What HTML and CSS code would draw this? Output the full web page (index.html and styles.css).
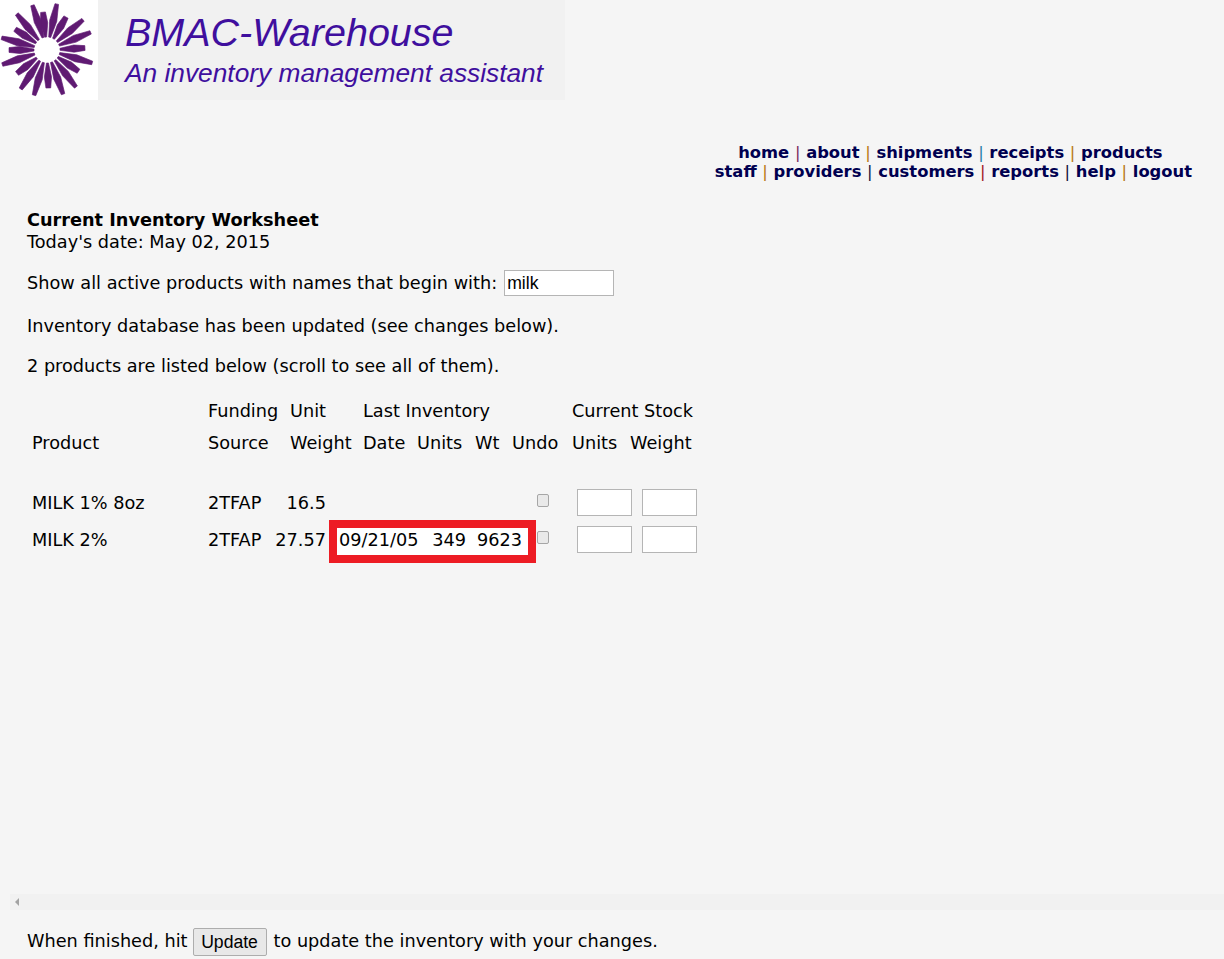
FILE: index.html
```html
<!DOCTYPE html>
<html lang="en">
<head>
    <meta charset="UTF-8">
    <meta name="viewport" content="width=device-width, initial-scale=1.0">
    <title>BMAC-Warehouse</title>
    <link rel="stylesheet" href="styles.css">
</head>
<body>
    <div class="page">
        <header class="banner">
            <svg class="logo" width="98" height="100" viewBox="0 0 98 100" aria-hidden="true">
                <defs>
                    <path id="ray-long" d="M-1 -13 L-3.6 -30 L-1.8 -47 L1.8 -47 L3.6 -30 L1 -13 Z"/>
                    <path id="ray-short" d="M-1 -13 L-3.6 -27 L-2.4 -38 L2.4 -38 L3.6 -27 L1 -13 Z"/>
                </defs>
                <rect width="98" height="100" fill="#fff"/>
                <g transform="translate(47 50)" fill="#5f1a72" stroke="#5f1a72" stroke-width="0.6" stroke-linejoin="round">
                    <use href="#ray-long" transform="rotate(12)"/>
                    <use href="#ray-short" transform="rotate(-6)"/>
                    <use href="#ray-short" transform="rotate(30)"/>
                    <use href="#ray-long" transform="rotate(50)"/>
                    <use href="#ray-long" transform="rotate(68)"/>
                    <use href="#ray-short" transform="rotate(87)"/>
                    <use href="#ray-long" transform="rotate(106)"/>
                    <use href="#ray-short" transform="rotate(124)"/>
                    <use href="#ray-long" transform="rotate(142)"/>
                    <use href="#ray-long" transform="rotate(160)"/>
                    <use href="#ray-short" transform="rotate(178)"/>
                    <use href="#ray-long" transform="rotate(196)"/>
                    <use href="#ray-long" transform="rotate(214)"/>
                    <use href="#ray-short" transform="rotate(232)"/>
                    <use href="#ray-long" transform="rotate(252)"/>
                    <use href="#ray-short" transform="rotate(270)"/>
                    <use href="#ray-long" transform="rotate(285)"/>
                    <use href="#ray-short" transform="rotate(303)"/>
                    <use href="#ray-long" transform="rotate(320)"/>
                    <use href="#ray-long" transform="rotate(342)"/>
                </g>
            </svg>
            <div class="banner-text">
                <div class="banner-title">BMAC-Warehouse</div>
                <div class="banner-sub">An inventory management assistant</div>
            </div>
        </header>

        <nav class="topnav">
            <div class="nav-first"><a href="#">home</a> <span class="sep plum">|</span> <a href="#">about</a> <span class="sep amber">|</span> <a href="#">shipments</a> <span class="sep teal">|</span> <a href="#">receipts</a> <span class="sep amber">|</span> <a href="#">products</a></div>
            <div><a href="#">staff</a> <span class="sep amber">|</span> <a href="#">providers</a> <span class="sep navy">|</span> <a href="#">customers</a> <span class="sep red">|</span> <a href="#">reports</a> <span class="sep navy">|</span> <a href="#">help</a> <span class="sep amber">|</span> <a href="#">logout</a></div>
        </nav>

        <main class="content">
            <h1>Current Inventory Worksheet</h1>
            <p class="today">Today's date: May 02, 2015</p>
            <form class="filter">
                <label for="prefix">Show all active products with names that begin with:</label>
                <input type="text" id="prefix" class="prefix" value="milk">
            </form>
            <p class="status">Inventory database has been updated (see changes below).</p>
            <p class="status second">2 products are listed below (scroll to see all of them).</p>

            <table class="heads">
                <colgroup>
                    <col class="h1"><col class="h2"><col class="h3"><col class="h4"><col class="h5"><col class="h6"><col class="h7"><col class="h8"><col class="h9">
                </colgroup>
                <tr>
                    <td></td>
                    <td>Funding</td>
                    <td>Unit</td>
                    <td colspan="3">Last Inventory</td>
                    <td></td>
                    <td colspan="2">Current Stock</td>
                </tr>
                <tr>
                    <td>Product</td>
                    <td>Source</td>
                    <td>Weight</td>
                    <td>Date</td>
                    <td>Units</td>
                    <td>Wt</td>
                    <td>Undo</td>
                    <td>Units</td>
                    <td>Weight</td>
                </tr>
            </table>
        </main>

        <div class="scroller">
            <div class="rows">
                <table class="items">
                    <colgroup>
                        <col class="d1"><col class="d2"><col class="d3"><col class="d4"><col class="d5"><col class="d6"><col class="d7"><col class="d8"><col class="d9">
                    </colgroup>
                    <tr>
                        <td class="name">MILK 1% 8oz</td>
                        <td class="name">2TFAP</td>
                        <td class="num">16.5</td>
                        <td class="date"></td>
                        <td class="num"></td>
                        <td class="num"></td>
                        <td class="mid"><input type="checkbox" class="undo"></td>
                        <td class="num"><input type="text" class="qty"></td>
                        <td class="num"><input type="text" class="qty"></td>
                    </tr>
                    <tr>
                        <td class="name">MILK 2%</td>
                        <td class="name">2TFAP</td>
                        <td class="num">27.57</td>
                        <td class="date">09/21/05</td>
                        <td class="num">349</td>
                        <td class="num">9623</td>
                        <td class="mid"><input type="checkbox" class="undo"></td>
                        <td class="num"><input type="text" class="qty"></td>
                        <td class="num"><input type="text" class="qty"></td>
                    </tr>
                </table>
                <div class="callout"></div>
            </div>
            <div class="hbar"><span class="hbar-arrow"></span></div>
        </div>

        <footer class="finish">
            When finished, hit <button type="button" class="update">Update</button> to update the inventory with your changes.
        </footer>
    </div>
</body>
</html>
```

FILE: styles.css
```css
html, body {
    margin: 0;
    height: 100%;
    overflow: hidden;
}

body {
    font-family: "DejaVu Sans", Verdana, sans-serif;
    font-size: 17.7px;
    background-color: #f5f5f5;
    color: #000;
}

.page {
    display: flex;
    flex-direction: column;
    height: 959px;
}

/* banner */
.banner {
    display: flex;
    width: 565px;
    height: 100px;
    background-color: #f1f1f1;
}

.logo {
    flex: none;
}

.banner-text {
    padding-left: 27px;
    font-family: "Liberation Sans", Arial, sans-serif;
    font-style: italic;
    color: #3f0f9e;
}

.banner-title {
    margin-top: 9px;
    font-size: 39.5px;
    line-height: 46px;
}

.banner-sub {
    margin-top: 3px;
    font-size: 26.3px;
    line-height: 30px;
}

/* nav */
.topnav {
    align-self: flex-end;
    margin: 43px 32px 0 0;
    text-align: center;
    font-weight: bold;
    font-size: 16.35px;
    line-height: 19px;
    color: #000050;
}

.topnav a {
    color: #000050;
    text-decoration: none;
}

.nav-first {
    padding-right: 6px;
}

.sep {
    font-weight: normal;
}

.plum { color: #7a1f5f; }
.amber { color: #b8770f; }
.teal { color: #1f7fa8; }
.navy { color: #10103a; }
.red { color: #a01020; }

/* worksheet top */
.content {
    padding: 28px 0 0 27px;
}

h1 {
    margin: 0;
    font-size: 17.7px;
    line-height: 22px;
    font-weight: bold;
}

.today {
    margin: 0;
    line-height: 22px;
}

.filter {
    display: flex;
    align-items: center;
    gap: 7px;
    margin-top: 17px;
    height: 26px;
}

.prefix {
    width: 110px;
    height: 26px;
    box-sizing: border-box;
    padding: 0 2px;
    border: 1px solid #b5b5b5;
    background-color: #fff;
    font-family: "Liberation Sans", Arial, sans-serif;
    font-size: 17.6px;
}

.status {
    margin: 19px 0 0;
    line-height: 22px;
}

.status.second {
    margin-top: 18px;
}

/* column heads */
table {
    border-collapse: collapse;
    table-layout: fixed;
}

td {
    box-sizing: border-box;
    padding: 0;
    white-space: nowrap;
}

.heads {
    margin-top: 18px;
    width: 668px;
}

.heads td {
    height: 32px;
    padding-left: 5px;
    line-height: 20px;
}

.h1 { width: 176px; }
.h2 { width: 82px; }
.h3 { width: 73px; }
.h4 { width: 54px; }
.h5 { width: 58px; }
.h6 { width: 37px; }
.h7 { width: 60px; }
.h8 { width: 58px; }
.h9 { width: 70px; }

/* scrolling rows */
.scroller {
    flex: 1;
    display: flex;
    flex-direction: column;
    margin: 25px 0 0 10px;
}

.rows {
    position: relative;
    flex: 1;
    padding-left: 17px;
}

.items {
    position: relative;
    z-index: 1;
    width: 670px;
}

.items td {
    height: 37px;
}

.d1 { width: 176px; }
.d2 { width: 68px; }
.d3 { width: 55px; }
.d4 { width: 99px; }
.d5 { width: 41px; }
.d6 { width: 56px; }
.d7 { width: 42px; }
.d8 { width: 68px; }
.d9 { width: 65px; }

.items .name { padding-left: 5px; }
.items .num { text-align: right; }
.items .date { padding-left: 13px; }
.items .mid { text-align: center; }

.undo {
    appearance: none;
    box-sizing: border-box;
    margin: 0;
    width: 12px;
    height: 13px;
    border: 1px solid #a6a6a6;
    border-radius: 2px;
    background-color: #e9e9e9;
    vertical-align: 2px;
}

.qty {
    width: 55px;
    height: 27px;
    box-sizing: border-box;
    margin: 0;
    padding: 0;
    border: 1px solid #b5b5b5;
    background-color: #fff;
    vertical-align: middle;
}

.callout {
    position: absolute;
    left: 319px;
    top: 36px;
    width: 207px;
    height: 43px;
    box-sizing: border-box;
    border: 8px solid #ed1c24;
    background-color: #fff;
}

.hbar {
    display: flex;
    align-items: center;
    height: 16px;
    padding-left: 5px;
    background-color: #f1f1f1;
}

.hbar-arrow {
    width: 0;
    height: 0;
    border-top: 4px solid transparent;
    border-bottom: 4px solid transparent;
    border-right: 4px solid #a3a3a3;
}

/* bottom line */
.finish {
    display: flex;
    align-items: center;
    gap: 5px;
    height: 49px;
    box-sizing: border-box;
    padding: 13px 0 0 27px;
}

.update {
    width: 74px;
    height: 28px;
    margin: 2px 2px 0 0;
    padding: 0;
    border: 1px solid #adadad;
    border-radius: 2px;
    background-color: #e8e8e8;
    font-family: "Liberation Sans", Arial, sans-serif;
    font-size: 17.6px;
    color: #000;
}
```
